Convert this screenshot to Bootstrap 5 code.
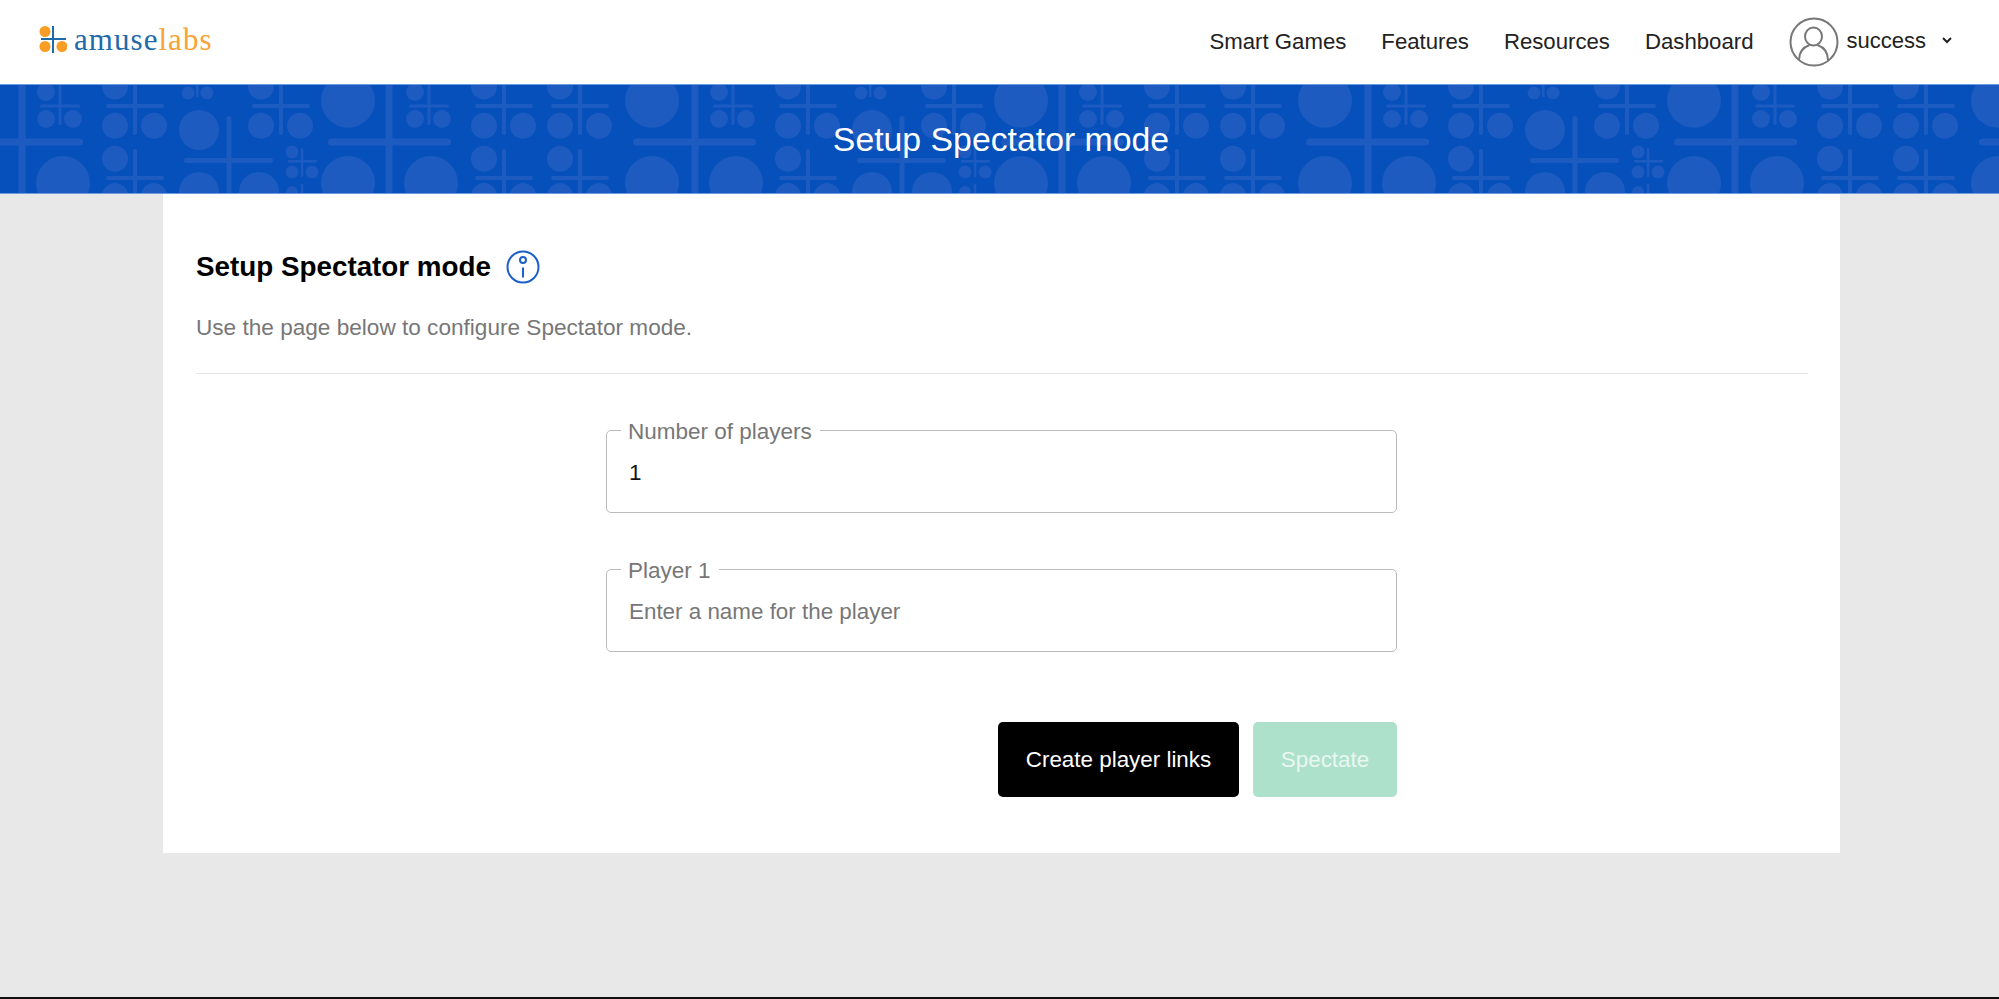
<!DOCTYPE html>
<html lang="en">
<head>
<meta charset="utf-8">
<title>Setup Spectator mode</title>
<link href="https://cdn.jsdelivr.net/npm/bootstrap@5.3.0/dist/css/bootstrap.min.css" rel="stylesheet">
<style>
html,body{height:100%}
body{font-family:"Liberation Sans",Arial,sans-serif;background:#e8e8e8;color:#000;height:999px;overflow:hidden;display:flex;flex-direction:column;border-bottom:2px solid #111}
.top-bar{height:84px;background:#fff;padding:0 47px 0 38px}
.brand-box{gap:7px;margin-top:-6px}
.brand-word{font-family:"Liberation Serif",serif;font-size:31px;line-height:1;letter-spacing:1.050px}
.brand-word .w1{color:#1f6aa8}.brand-word .w2{color:#f9a236}
.menu-row{gap:35px;margin-top:-1px}
.menu-row a{font-size:22.200px;color:#222;text-decoration:none}
.user-box{margin-left:35px;gap:8px;font-size:22px;color:#222}
.user-box .user-name{margin-top:-3px}
.user-caret{margin-left:8px;margin-top:-3px}
.hero{height:110px;background:#0550ba;border-top:1px solid #6b9ae0;border-bottom:1px solid #6b9ae0;overflow:hidden}
.hero-art{position:absolute;left:0;top:-1px;width:100%;height:110px}
.hero-art *{fill:#1e5bc1}
.hero-title{position:relative;font-size:33.800px;font-weight:400;color:#fff;margin:0 0 0 3px}
.sheet-wrap{padding:0 159px 0 163px}
.sheet{background:#fff;height:659px;padding:56px 32px 0 33px}
.sheet-head{font-size:27.800px;font-weight:700;margin:0;gap:15px;line-height:32px}
.sheet-note{font-size:22.600px;color:#777;margin:29px 0 0;line-height:30px;height:61px;border-bottom:1px solid #e6e6e6}
.form-area{width:791px;margin:42px 0 0 410px}
.field-box{border:1.5px solid #bbb;border-radius:5px;height:97px;padding:0 22px;margin-bottom:42px}
.field-box legend{float:none;width:auto;font-size:22.500px;line-height:24px;color:#777;padding:4px 8px 0 7px;margin:-16px 0 0 -8px}
.field-box .form-control{border:0;padding:0;border-radius:0;font-size:22.400px;height:32px;margin-top:13px;box-shadow:none;color:#111;font-family:inherit}
.field-box .form-control::placeholder{color:#777;opacity:1}
.act-row{gap:14px;margin-top:70px}
.act-row .btn{height:75px;border-radius:5px;font-size:22.400px;border:0;--bs-btn-disabled-opacity:1}
.act-dark{width:241px;background:#000;color:#fff}
.act-dark:hover{background:#000;color:#fff}
.act-soft{width:144px;background:#ade1cb;color:#e9f7f1}
.act-soft:disabled{background:#ade1cb;color:#e9f7f1}
</style>
</head>
<body>
<nav class="navbar top-bar d-flex align-items-center justify-content-between flex-nowrap">
  <a class="brand-box d-flex align-items-center text-decoration-none" href="#">
    <svg width="29" height="28" viewBox="0 0 29 28" aria-hidden="true">
      <circle cx="7" cy="6.500" r="5.500" fill="#f99d25"/><circle cx="7" cy="21.500" r="5.500" fill="#f99d25"/><circle cx="24" cy="21.500" r="5.500" fill="#f99d25"/>
      <rect x="3" y="13" width="25" height="2" fill="#1f6aa8"/><rect x="14" y="1" width="2" height="27" fill="#1f6aa8"/>
    </svg>
    <span class="brand-word"><span class="w1">amuse</span><span class="w2">labs</span></span>
  </a>
  <div class="d-flex align-items-center">
    <div class="menu-row d-flex align-items-center">
      <a href="#">Smart Games</a><a href="#">Features</a><a href="#">Resources</a><a href="#">Dashboard</a>
    </div>
    <div class="user-box d-flex align-items-center">
      <svg width="50" height="50" viewBox="0 0 50 50" fill="none" stroke="#777" stroke-width="2" aria-hidden="true">
        <circle cx="25" cy="25" r="23.500"/><ellipse cx="24.500" cy="19.500" rx="8.500" ry="9"/>
        <path d="M10 43c0-9 5-13 10.500-15M39 43c0-9-5-13-10.500-15"/>
      </svg>
      <span class="user-name">success</span>
      <svg class="user-caret" width="10" height="7" viewBox="0 0 10 7" fill="none" stroke="#222" stroke-width="2" aria-hidden="true"><path d="M1 1l4 4 4-4"/></svg>
    </div>
  </div>
</nav>

<header class="hero position-relative d-flex align-items-center justify-content-center">
  <svg class="hero-art" aria-hidden="true">
    <defs>
      <g id="mUp">
        <rect x="-2" y="-10" width="4" height="61" rx="2"/><rect x="-29" y="20" width="58" height="4" rx="2"/>
        <circle cx="-20" cy="2.500" r="13"/><circle cx="-20" cy="41.700" r="13"/><circle cx="19" cy="41.700" r="13"/>
      </g>
      <g id="mLow">
        <rect x="-2" y="65" width="4" height="60" rx="2"/><rect x="-29" y="92" width="58" height="4" rx="2"/>
        <circle cx="-20" cy="74.700" r="13"/><circle cx="-20" cy="112" r="13"/><circle cx="19" cy="112" r="13"/>
      </g>
      <g id="sPlus">
        <rect x="-1.500" y="-5" width="3" height="46" rx="1.500"/><rect x="-20" y="20.500" width="40" height="3" rx="1.500"/>
        <circle cx="-14" cy="8" r="9"/><circle cx="-14" cy="35" r="9"/><circle cx="13" cy="35" r="9"/>
      </g>
      <g id="tile">
        <circle cx="348" cy="16.700" r="27"/><circle cx="652" cy="16.700" r="27"/>
        <circle cx="63" cy="99" r="27"/><circle cx="348" cy="99" r="27"/><circle cx="431" cy="99" r="27"/><circle cx="652" cy="99" r="27"/>
        <rect x="18.500" y="-5" width="7" height="120"/><rect x="-40" y="54.500" width="123" height="7" rx="3.500"/>
        <rect x="385.500" y="-5" width="7" height="120"/><rect x="328" y="54.500" width="123" height="7" rx="3.500"/>
        <use href="#mUp" x="135"/><use href="#mLow" x="135"/>
        <use href="#mUp" x="281"/>
        <use href="#mUp" x="504"/><use href="#mLow" x="504"/>
        <use href="#mUp" x="580"/><use href="#mLow" x="580"/>
        <use href="#sPlus" x="60"/><use href="#sPlus" x="429"/>
        <rect x="226.500" y="32" width="5" height="90" rx="2.500"/><rect x="184" y="74" width="89" height="5" rx="2.500"/>
        <circle cx="199" cy="46" r="20"/><circle cx="199" cy="108" r="20"/><circle cx="259" cy="108" r="20"/>
        <rect x="288" y="76" width="29" height="2.500" rx="1"/><rect x="300.800" y="64" width="2.500" height="29" rx="1"/>
        <rect x="300.800" y="100" width="2.500" height="15"/>
        <circle cx="292" cy="68" r="6.500"/><circle cx="292" cy="88" r="6.500"/><circle cx="312" cy="88" r="6.500"/><circle cx="292" cy="108" r="6"/>
        <circle cx="188" cy="9" r="6.500"/><circle cx="207" cy="9" r="6.500"/><rect x="196" y="-2" width="2.500" height="15"/>
      </g>
    </defs>
    <use href="#tile" x="0"/><use href="#tile" x="673"/><use href="#tile" x="1346"/><use href="#tile" x="2019"/>
  </svg>
  <h1 class="hero-title">Setup Spectator mode</h1>
</header>

<main class="sheet-wrap flex-grow-1">
  <section class="sheet">
    <h2 class="sheet-head d-flex align-items-center">Setup Spectator mode
      <svg width="34" height="34" viewBox="0 0 34 34" fill="none" stroke="#1b5fc7" stroke-width="2" aria-hidden="true">
        <circle cx="17" cy="17" r="15.500"/><circle cx="17" cy="10" r="3"/><path d="M17 17.500v10"/>
      </svg>
    </h2>
    <p class="sheet-note">Use the page below to configure Spectator mode.</p>
    <form class="form-area">
      <fieldset class="field-box">
        <legend>Number of players</legend>
        <input class="form-control" type="text" value="1" aria-label="Number of players">
      </fieldset>
      <fieldset class="field-box">
        <legend>Player 1</legend>
        <input class="form-control" type="text" placeholder="Enter a name for the player" aria-label="Player 1">
      </fieldset>
      <div class="act-row d-flex justify-content-end">
        <button type="button" class="btn act-dark">Create player links</button>
        <button type="button" class="btn act-soft" disabled>Spectate</button>
      </div>
    </form>
  </section>
</main>
</body>
</html>
